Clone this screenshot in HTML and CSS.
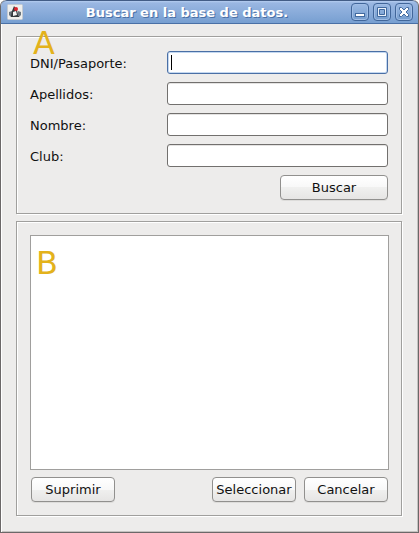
FILE: index.html
```html
<!DOCTYPE html>
<html lang="es">
<head>
<meta charset="utf-8">
<title>Buscar en la base de datos.</title>
<link rel="stylesheet" href="styles.css">
</head>
<body>
<div class="window">
  <header class="titlebar">
    <svg class="app-icon" viewBox="0 0 16 16" aria-hidden="true">
      <rect x="0.5" y="0.5" width="15" height="15" rx="1" fill="#eeeeec" stroke="#c3cad3"/>
      <path d="M2 8l3-1v3l5 1 1-4 3 1v3l-2 2H4l-2-2z" fill="#69747c"/>
      <path d="M7 2l3 4 1 6H4l1-5z" fill="#33383c"/>
      <path d="M6 8l3-1 1 4-4 1z" fill="#f4f4f4"/>
      <path d="M4 12h8v1H4z" fill="#33383c"/>
      <circle cx="9" cy="5" r="2" fill="#d8232e"/>
    </svg>
    <h1 class="title">Buscar en la base de datos.</h1>
    <div class="controls">
      <button class="control" type="button" aria-label="Minimizar">
        <svg viewBox="0 0 16 16"><rect x="3.5" y="9.500" width="9" height="3" fill="#fff" stroke="#426a9f"/></svg>
      </button>
      <button class="control" type="button" aria-label="Maximizar">
        <svg viewBox="0 0 16 16"><path d="M3.500 3.500h9v9h-9zM5.500 5.500v5h5v-5z" fill="#e9f0fa" fill-rule="evenodd" stroke="#426a9f"/></svg>
      </button>
      <button class="control" type="button" aria-label="Cerrar">
        <svg viewBox="0 0 16 16"><path d="M3.500 3.500h2L8 6l2.500-2.500h2v2L10 8l2.500 2.500v2h-2L8 10l-2.500 2.500h-2v-2L6 8 3.500 5.500z" fill="#fff" stroke="#426a9f"/></svg>
      </button>
    </div>
  </header>
  <main class="content">
    <form class="panel search">
      <span class="mark mark-a">A</span>
      <label for="dni">DNI/Pasaporte:</label>
      <input id="dni" type="text" autofocus>
      <label for="apellidos">Apellidos:</label>
      <input id="apellidos" type="text">
      <label for="nombre">Nombre:</label>
      <input id="nombre" type="text">
      <label for="club">Club:</label>
      <input id="club" type="text">
      <button class="button wide" type="button">Buscar</button>
    </form>
    <section class="panel results">
      <div class="list"><span class="mark mark-b">B</span></div>
      <div class="actions">
        <button class="button first" type="button">Suprimir</button>
        <button class="button" type="button">Seleccionar</button>
        <button class="button" type="button">Cancelar</button>
      </div>
    </section>
  </main>
</div>
<script src="focus.js"></script>
</body>
</html>
```
FILE: focus.js
```js
document.getElementById("dni").focus();
```
FILE: styles.css
```css
* {
  box-sizing: border-box;
}

body {
  margin: 0;
  background: #fff;
  color: #111;
  font: 13px/16px "DejaVu Sans", sans-serif;
}

.window {
  display: flex;
  flex-direction: column;
  min-height: 100vh;
  border: 1px solid #6b6868;
  border-top: 0;
  border-radius: 6px 6px 0 0;
  background: #edeceb;
  box-shadow: inset 1px 0 #fff, inset -1px -1px #c5c2c0;
  overflow: hidden;
}

.titlebar {
  display: flex;
  align-items: center;
  height: 24px;
  padding: 0 5px 0 6px;
  border-top: 1px solid #435d86;
  border-bottom: 1px solid #4a70a6;
  border-radius: 6px 6px 0 0;
  background: linear-gradient(#b5cdf0 0, #9ab7e2 2px, #779fd1 100%);
}

.app-icon {
  width: 16px;
  height: 16px;
}

.title {
  flex: 1;
  margin: 0;
  padding-top: 1px;
  color: #fff;
  font-size: 13px;
  font-weight: bold;
  line-height: 16px;
  text-align: center;
  white-space: nowrap;
  text-shadow: 1px 1px #4a70a6;
}

.controls {
  display: flex;
  gap: 4px;
}

.control {
  width: 18px;
  height: 18px;
  padding: 0;
  border: 1px solid #41669a;
  border-radius: 4px;
  background: linear-gradient(#9ab9e4, #759dce);
  box-shadow: inset 0 0 0 1px #a0bde5;
}

.control svg {
  display: block;
  width: 16px;
  height: 16px;
}

.content {
  display: flex;
  flex: 1;
  flex-direction: column;
  gap: 7px;
  padding: 12px 16px 16px 15px;
}

.panel {
  position: relative;
  border: 1px solid #a09f9d;
  box-shadow: 1px 1px #fff, inset 1px 1px #fff;
}

.search {
  display: grid;
  grid-template-columns: 129px 1fr;
  gap: 8px;
  align-items: center;
  padding: 14px 13px 13px;
}

.search label {
  padding-top: 2px;
}

.search input {
  width: 100%;
  height: 23px;
  padding: 0 3px;
  border: 1px solid #72706e;
  border-radius: 3px;
  outline: 0;
  background: #fff;
  color: #000;
  font: inherit;
  box-shadow: inset 0 1px #e4e3e2;
}

.search input:focus {
  border-color: #4a6fa5;
  box-shadow: inset 0 0 0 1px #c4d8f0;
}

#dni:focus {
  background: linear-gradient(#000, #000) 3px 3px / 1px 15px no-repeat #fff;
  caret-color: transparent;
}

.button {
  width: 84px;
  height: 25px;
  padding: 1px 0 0;
  border: 1px solid #91908e;
  border-radius: 4px;
  background: linear-gradient(#fff, #f8f8f8 50%, #f0f0ef 50%, #e6e5e4);
  box-shadow: 0 1px #dddcda;
  color: #111;
  font: inherit;
}

.wide {
  grid-column: 2;
  justify-self: end;
  width: 108px;
}

.results {
  display: flex;
  flex: 1;
  flex-direction: column;
  gap: 7px;
  padding: 13px 12px 13px 13px;
}

.list {
  position: relative;
  flex: 1;
  border: 1px solid #a09f9d;
  background: #fff;
}

.actions {
  display: flex;
  gap: 8px;
  padding: 0 1px;
}

.first {
  margin-right: auto;
}

.mark {
  position: absolute;
  color: #e3b21c;
  font-size: 32px;
  line-height: 32px;
}

.mark-a {
  top: -10px;
  left: 16px;
}

.mark-b {
  top: 11px;
  left: 5px;
}
```
